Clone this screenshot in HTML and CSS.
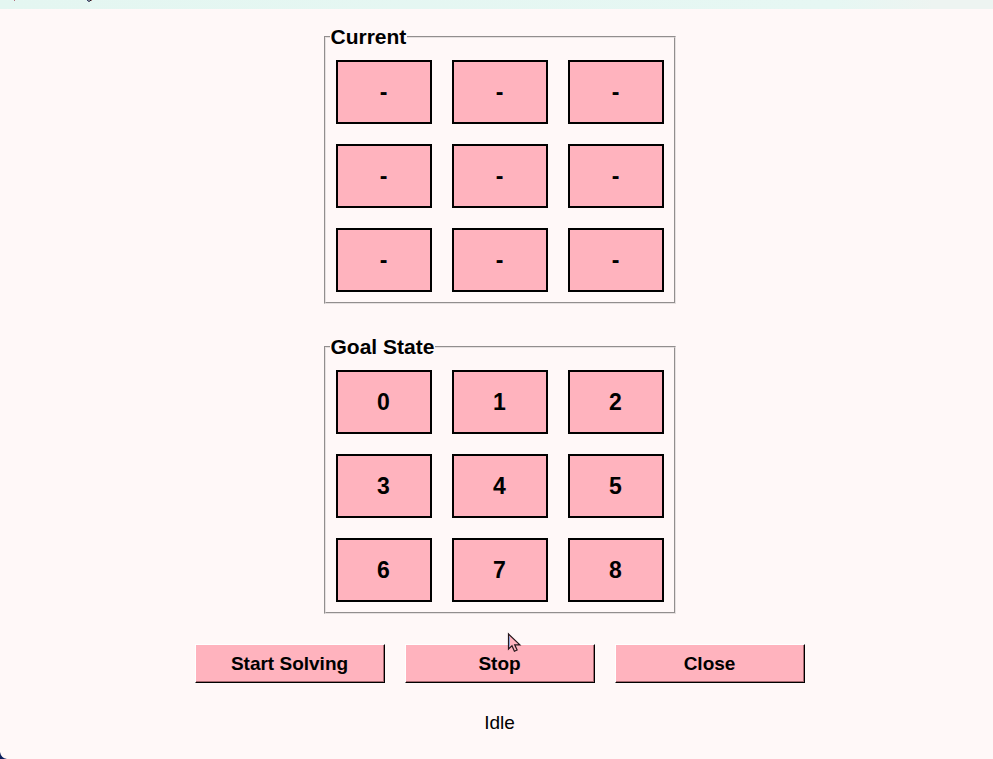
FILE: index.html
```html
<!DOCTYPE html>
<html lang="en">
<head>
  <meta charset="utf-8">
  <meta name="viewport" content="width=device-width, initial-scale=1">
  <title>Puzzle Solver</title>
  <link rel="stylesheet" href="styles.css">
</head>
<body>
  <div class="titlebar">
    <svg width="120" height="9" viewBox="0 0 120 9" shape-rendering="crispEdges" aria-hidden="true">
      <path d="M14 0h1v1h-1z" fill="#b0707c"/>
      <path d="M87 0h1v1h-1z" fill="#33406e"/>
      <path d="M88 0h2v1h-2z" fill="#777b86"/>
      <path d="M90 0h1v1h-1z" fill="#1b1620"/>
      <path d="M88 1h2v1h-2z" fill="#596079"/>
      <path d="M91 0h1v1h-1z" fill="#a67c80"/>
    </svg>
  </div>
  <main class="solver">
    <fieldset class="board">
      <legend>Current</legend>
      <div class="grid">
        <div class="tile">-</div>
        <div class="tile">-</div>
        <div class="tile">-</div>
        <div class="tile">-</div>
        <div class="tile">-</div>
        <div class="tile">-</div>
        <div class="tile">-</div>
        <div class="tile">-</div>
        <div class="tile">-</div>
      </div>
    </fieldset>
    <fieldset class="board">
      <legend>Goal State</legend>
      <div class="grid">
        <div class="tile">0</div>
        <div class="tile">1</div>
        <div class="tile">2</div>
        <div class="tile">3</div>
        <div class="tile">4</div>
        <div class="tile">5</div>
        <div class="tile">6</div>
        <div class="tile">7</div>
        <div class="tile">8</div>
      </div>
    </fieldset>
    <div class="actions">
      <button type="button">Start Solving</button>
      <button type="button">Stop</button>
      <button type="button">Close</button>
      <svg class="pointer" width="13" height="20" viewBox="0 0 13 20" aria-hidden="true">
        <path d="M.5 1v15l3.500-3.300 2.400 5.500 2.700-1.200-2.400-5.200h5.200z" fill="#ffb3be" stroke="#24151a" stroke-width="1.200"/>
        <path d="M1.500 3.500v10" stroke="#8fa3d8" stroke-width="1"/>
      </svg>
    </div>
    <p class="status" role="status">Idle</p>
  </main>
  <svg class="corner" width="7" height="7" viewBox="0 0 7 7" aria-hidden="true">
    <path d="M0 0Q1 6 7 7H0z" fill="#0c1f5c"/>
  </svg>
</body>
</html>
```
FILE: styles.css
```css
* {
  box-sizing: border-box;
}

body {
  position: relative;
  min-height: 100vh;
  margin: 0;
  background: #fff8f8;
  color: #000;
  font-family: "Liberation Sans", Arial, sans-serif;
}

.titlebar {
  height: 9px;
  background: linear-gradient(to right, #e4f6f1 0%, #e6f7f3 84%, #edf4f1 94%);
}

.titlebar svg {
  display: block;
}

.solver {
  display: flex;
  flex-direction: column;
  align-items: center;
  padding: 16px 0 0 6px;
}

.board {
  margin: 0;
  padding: 0 4px;
  border: 2px groove #e6e0e0;
}

.board + .board {
  margin-top: 31px;
}

.board legend {
  padding: 0 1px;
  font-size: 21px;
  font-weight: bold;
  line-height: 24px;
}

.grid {
  display: grid;
  grid-template-columns: repeat(3, 96px);
  gap: 20px;
  padding: 11px 6px 10px;
}

.tile {
  display: flex;
  align-items: center;
  justify-content: center;
  height: 64px;
  border: 2px solid #000;
  background: #ffb3be;
  font-size: 23px;
  font-weight: bold;
}

.actions {
  position: relative;
  display: flex;
  gap: 20px;
  margin-top: 30px;
}

.actions button {
  width: 190px;
  height: 39px;
  padding: 0;
  border: 1px solid;
  border-color: #fff #000 #000 #fff;
  background: #ffb3be;
  box-shadow: inset -1px -1px #a6686f;
  color: #000;
  font: bold 19px "Liberation Sans", Arial, sans-serif;
}

.pointer {
  position: absolute;
  top: -11px;
  left: 313px;
  overflow: visible;
}

.status {
  margin: 28px 0 0;
  font-size: 19px;
  line-height: 24px;
}

.corner {
  position: absolute;
  bottom: 0;
  left: 0;
}
```
